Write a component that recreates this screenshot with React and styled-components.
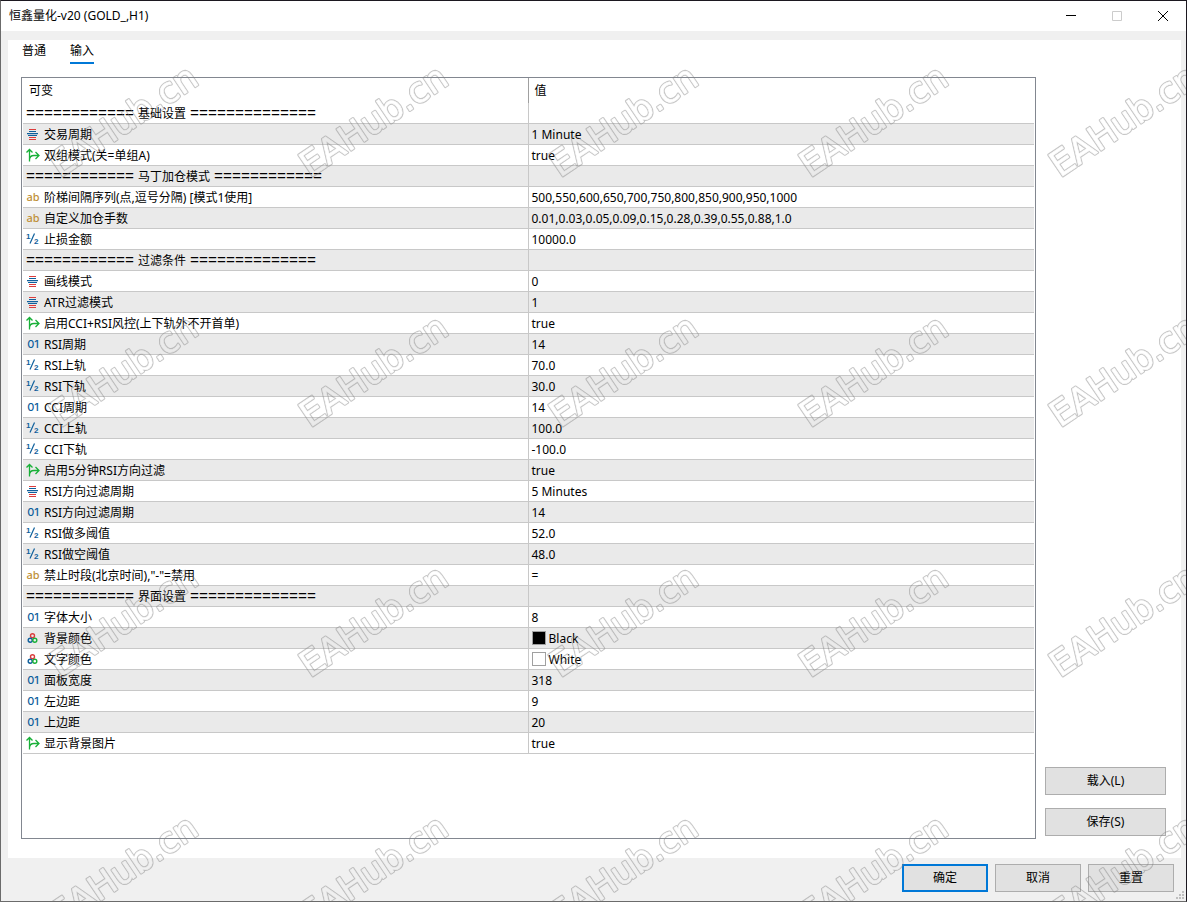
import { useState } from "react";
import styled, { createGlobalStyle } from "styled-components";

const GlobalStyle = createGlobalStyle`
    * {
        box-sizing: border-box;
    }
    body {
        margin: 0;
        background-color: #f0f0f0;
    }
    body, button, table {
        font-family: "Noto Sans", "Noto Sans CJK SC", sans-serif;
        font-size: 12px;
        line-height: 16px;
        color: #000;
    }
`
const Window = styled.div`
    position: relative;
    min-height: 100vh;
    display: flex;
    flex-direction: column;
    overflow: hidden;
    background-color: #f0f0f0;
    border: 1px solid #6b6b6b;
    border-top-color: #1c1820;
    border-right-color: #1c1820;
`
const TitleBar = styled.header`
    height: 30px;
    display: flex;
    align-items: center;
    justify-content: space-between;
    padding-left: 8px;
    background-color: white;
`
const Title = styled.h1`
    margin: 0;
    font-size: 12px;
    font-weight: 400;
`
const WindowButtons = styled.div`
    display: flex;
    height: 100%;
`
const WindowButton = styled.button`
    width: 46px;
    padding: 0;
    border: none;
    background: none;
    display: flex;
    align-items: center;
    justify-content: center;
    color: ${props => (props.disabled ? "#cccccc" : "#000")};
`
const Panel = styled.main`
    flex: 1;
    display: flex;
    flex-direction: column;
    margin: 9px 5px 0 7px;
    padding: 0 15px 19px 13px;
    background-color: white;
`
const Tabs = styled.div`
    display: flex;
    gap: 24px;
    height: 24px;
    margin-bottom: 13px;
    padding-left: 1px;
`
const Tab = styled.button`
    padding: 0;
    border: none;
    border-bottom: 2px solid ${props => (props.$active ? "#0078d7" : "transparent")};
    background: none;
`
const Content = styled.div`
    flex: 1;
    display: flex;
    gap: 9px;
`
const Grid = styled.div`
    flex: 1;
    padding: 0 1px;
    border: 1px solid #828790;
`
const Table = styled.table`
    width: 100%;
    table-layout: fixed;
    border-collapse: separate;
    border-spacing: 0;
`
const HeadCell = styled.th`
    height: 25px;
    padding: 0 6px;
    font-weight: 400;
    text-align: left;

    &:first-child {
        border-right: 1px solid #a0a0a0;
    }
`
const Row = styled.tr`
    &:nth-child(even) {
        background-color: #eaeaea;
    }
`
const Cell = styled.td`
    height: 21px;
    padding: 0 3px;
    white-space: nowrap;
    border-bottom: 1px solid #c8c8c8;
    border-right: 1px solid #c8c8c8;

    &:last-child {
        border-right: none;
    }
`
const CellContent = styled.div`
    display: flex;
    align-items: center;
    gap: ${props => props.$gap}px;
    height: 20px;
`
const Label = styled.span`
    padding-top: 2px;
`
const Rule = styled.span`
    padding-top: 4px;
    font-family: "Liberation Mono", monospace;
    font-size: 15px;
`
const IconBox = styled.span`
    width: 14px;
    height: 14px;
    display: flex;
    align-items: center;
    justify-content: center;
    line-height: 14px;
    font-family: ${props => (props.$family || "Noto Sans")}, sans-serif;
    font-size: 11px;
    font-weight: ${props => props.$weight || 400};
    color: ${props => props.$color};

    svg {
        overflow: visible;
    }
`
const Swatch = styled.span`
    width: 14px;
    height: 14px;
    border: 1px solid #a0a0a0;
    background-color: ${props => props.$color};
`
const SideButtons = styled.div`
    width: 121px;
    display: flex;
    flex-direction: column;
    justify-content: flex-end;
    gap: 13px;
    padding-bottom: 3px;
`
const Button = styled.button`
    height: 28px;
    padding: 0;
    background-color: #e1e1e1;
    border: ${props => (props.$primary ? "2px solid #0078d7" : "1px solid #adadad")};
`
const Footer = styled.footer`
    display: flex;
    justify-content: flex-end;
    gap: 7px;
    padding: 6px 12px 9px;

    ${Button} {
        width: 86px;
    }
`
const Grip = styled.svg`
    position: absolute;
    right: 2px;
    bottom: 2px;
`
const WatermarkLayer = styled.svg`
    position: absolute;
    top: -1px;
    left: -1px;
    width: calc(100% + 2px);
    height: calc(100% + 2px);
    pointer-events: none;

    text {
        font-family: "DejaVu Sans", sans-serif;
        font-size: 35px;
        stroke-linejoin: round;
    }
`

const rows = [
  { type: "group", before: 12, name: "基础设置", after: 14 },
  { type: "enum", name: "交易周期", value: "1 Minute" },
  { type: "bool", name: "双组模式(关=单组A)", value: "true" },
  { type: "group", before: 12, name: "马丁加仓模式", after: 12 },
  { type: "string", name: "阶梯间隔序列(点,逗号分隔) [模式1使用]", value: "500,550,600,650,700,750,800,850,900,950,1000" },
  { type: "string", name: "自定义加仓手数", value: "0.01,0.03,0.05,0.09,0.15,0.28,0.39,0.55,0.88,1.0" },
  { type: "double", name: "止损金额", value: "10000.0" },
  { type: "group", before: 12, name: "过滤条件", after: 14 },
  { type: "enum", name: "画线模式", value: "0" },
  { type: "enum", name: "ATR过滤模式", value: "1" },
  { type: "bool", name: "启用CCI+RSI风控(上下轨外不开首单)", value: "true" },
  { type: "int", name: "RSI周期", value: "14" },
  { type: "double", name: "RSI上轨", value: "70.0" },
  { type: "double", name: "RSI下轨", value: "30.0" },
  { type: "int", name: "CCI周期", value: "14" },
  { type: "double", name: "CCI上轨", value: "100.0" },
  { type: "double", name: "CCI下轨", value: "-100.0" },
  { type: "bool", name: "启用5分钟RSI方向过滤", value: "true" },
  { type: "enum", name: "RSI方向过滤周期", value: "5 Minutes" },
  { type: "int", name: "RSI方向过滤周期", value: "14" },
  { type: "double", name: "RSI做多阈值", value: "52.0" },
  { type: "double", name: "RSI做空阈值", value: "48.0" },
  { type: "string", name: "禁止时段(北京时间),\"-\"=禁用", value: "=" },
  { type: "group", before: 12, name: "界面设置", after: 14 },
  { type: "int", name: "字体大小", value: "8" },
  { type: "color", name: "背景颜色", value: "Black" },
  { type: "color", name: "文字颜色", value: "White" },
  { type: "int", name: "面板宽度", value: "318" },
  { type: "int", name: "左边距", value: "9" },
  { type: "int", name: "上边距", value: "20" },
  { type: "bool", name: "显示背景图片", value: "true" },
];

const TypeIcon = ({ type }) => {
  switch (type) {
    case "string":
      return <IconBox $color="#c09038" $weight={500}>ab</IconBox>;
    case "double":
      return (
        <IconBox>
          <svg width="14" height="14" fill="#10609c" fontSize="8" fontWeight="700" fontFamily="Liberation Sans">
            <text x="0" y="7">1</text>
            <text x="8" y="12">2</text>
            <path d="M4 11.5L8.5 1.5" stroke="#10609c" strokeWidth="1.2" />
          </svg>
        </IconBox>
      );
    case "int":
      return <IconBox $color="#10609c" $family="Inter" $weight={500}>01</IconBox>;
    case "enum":
      return (
        <IconBox>
          <svg width="14" height="14">
            <path d="M3 2.5H10 M3 10.5H10 M3 12.5H10" stroke="#dc3c3c" />
            <path d="M3 4.5H10 M1 6.5H12 M2 8.5H11" stroke="#10609c" />
            <path d="M1 7H12" stroke="#10609c" strokeOpacity="0.5" />
          </svg>
        </IconBox>
      );
    case "bool":
      return (
        <IconBox>
          <svg width="14" height="14" fill="none" stroke="#18b038" strokeWidth="1.3">
            <path d="M3.5 13.5V1.5 M0.5 4.5L3.5 1.5L6.5 4.5 M3.5 12C3.5 9 5 7.5 8 7.5H13 M9.5 4L13 7.5L9.5 11" />
          </svg>
        </IconBox>
      );
    default:
      return (
        <IconBox>
          <svg width="14" height="14" fill="none" strokeWidth="1.4">
            <circle cx="6.5" cy="4.8" r="2" stroke="#dc3c3c" />
            <circle cx="4.2" cy="9.2" r="2" stroke="#10609c" />
            <circle cx="8.8" cy="9.2" r="2" stroke="#18b038" />
          </svg>
        </IconBox>
      );
  }
};

const Watermark = () => (
  <WatermarkLayer aria-hidden="true">
    <defs>
      <mask id="outline" maskUnits="userSpaceOnUse" x="0" y="0" width="250" height="250">
        <g transform="translate(60 178) rotate(-34)">
          <text fill="white" stroke="white" strokeWidth="2.6">EAHub.cn</text>
          <text fill="black" stroke="black" strokeWidth="0.6">EAHub.cn</text>
        </g>
      </mask>
      <pattern id="tile" width="250" height="250" patternUnits="userSpaceOnUse">
        <rect width="250" height="250" fill="#808080" fillOpacity="0.45" mask="url(#outline)" />
      </pattern>
    </defs>
    <rect width="100%" height="100%" fill="url(#tile)" />
  </WatermarkLayer>
);

const App = () => {
  const [tab, setTab] = useState("输入");

  return (
    <>
      <GlobalStyle />
      <Window>
        <TitleBar>
          <Title>恒鑫量化-v20 (GOLD_,H1)</Title>
          <WindowButtons>
            <WindowButton aria-label="最小化">
              <svg width="10" height="10" stroke="currentColor"><path d="M0 4.5H10" /></svg>
            </WindowButton>
            <WindowButton aria-label="最大化" disabled>
              <svg width="10" height="10" fill="none" stroke="currentColor"><path d="M0.5 0.5H9.5V9.5H0.5Z" /></svg>
            </WindowButton>
            <WindowButton aria-label="关闭">
              <svg width="10" height="10" stroke="currentColor"><path d="M0 0L10 10M10 0L0 10" /></svg>
            </WindowButton>
          </WindowButtons>
        </TitleBar>
        <Panel>
          <Tabs role="tablist">
            {["普通", "输入"].map(name => (
              <Tab key={name} role="tab" aria-selected={tab === name} $active={tab === name} onClick={() => setTab(name)}>
                {name}
              </Tab>
            ))}
          </Tabs>
          <Content>
            <Grid>
              <Table>
                <thead>
                  <tr>
                    <HeadCell>可变</HeadCell>
                    <HeadCell>值</HeadCell>
                  </tr>
                </thead>
                <tbody>
                  {rows.map((row, i) => (
                    <Row key={i}>
                      <Cell>
                        {row.type === "group" ? (
                          <CellContent $gap={4}>
                            <Rule>{"=".repeat(row.before)}</Rule>
                            <Label>{row.name}</Label>
                            <Rule>{"=".repeat(row.after)}</Rule>
                          </CellContent>
                        ) : (
                          <CellContent $gap={4}>
                            <TypeIcon type={row.type} />
                            <Label>{row.name}</Label>
                          </CellContent>
                        )}
                      </Cell>
                      <Cell>
                        <CellContent $gap={3}>
                          {row.type === "color" && <Swatch $color={row.value.toLowerCase()} />}
                          <Label>{row.value}</Label>
                        </CellContent>
                      </Cell>
                    </Row>
                  ))}
                </tbody>
              </Table>
            </Grid>
            <SideButtons>
              <Button>载入(L)</Button>
              <Button>保存(S)</Button>
            </SideButtons>
          </Content>
        </Panel>
        <Footer>
          <Button $primary>确定</Button>
          <Button>取消</Button>
          <Button>重置</Button>
        </Footer>
        <Grip width="8" height="8" fill="#bfbfbf">
          <path d="M6 0h2v2h-2z M3 3h2v2h-2z M6 3h2v2h-2z M0 6h2v2h-2z M3 6h2v2h-2z M6 6h2v2h-2z" />
        </Grip>
        <Watermark />
      </Window>
    </>
  );
};

export default App;
